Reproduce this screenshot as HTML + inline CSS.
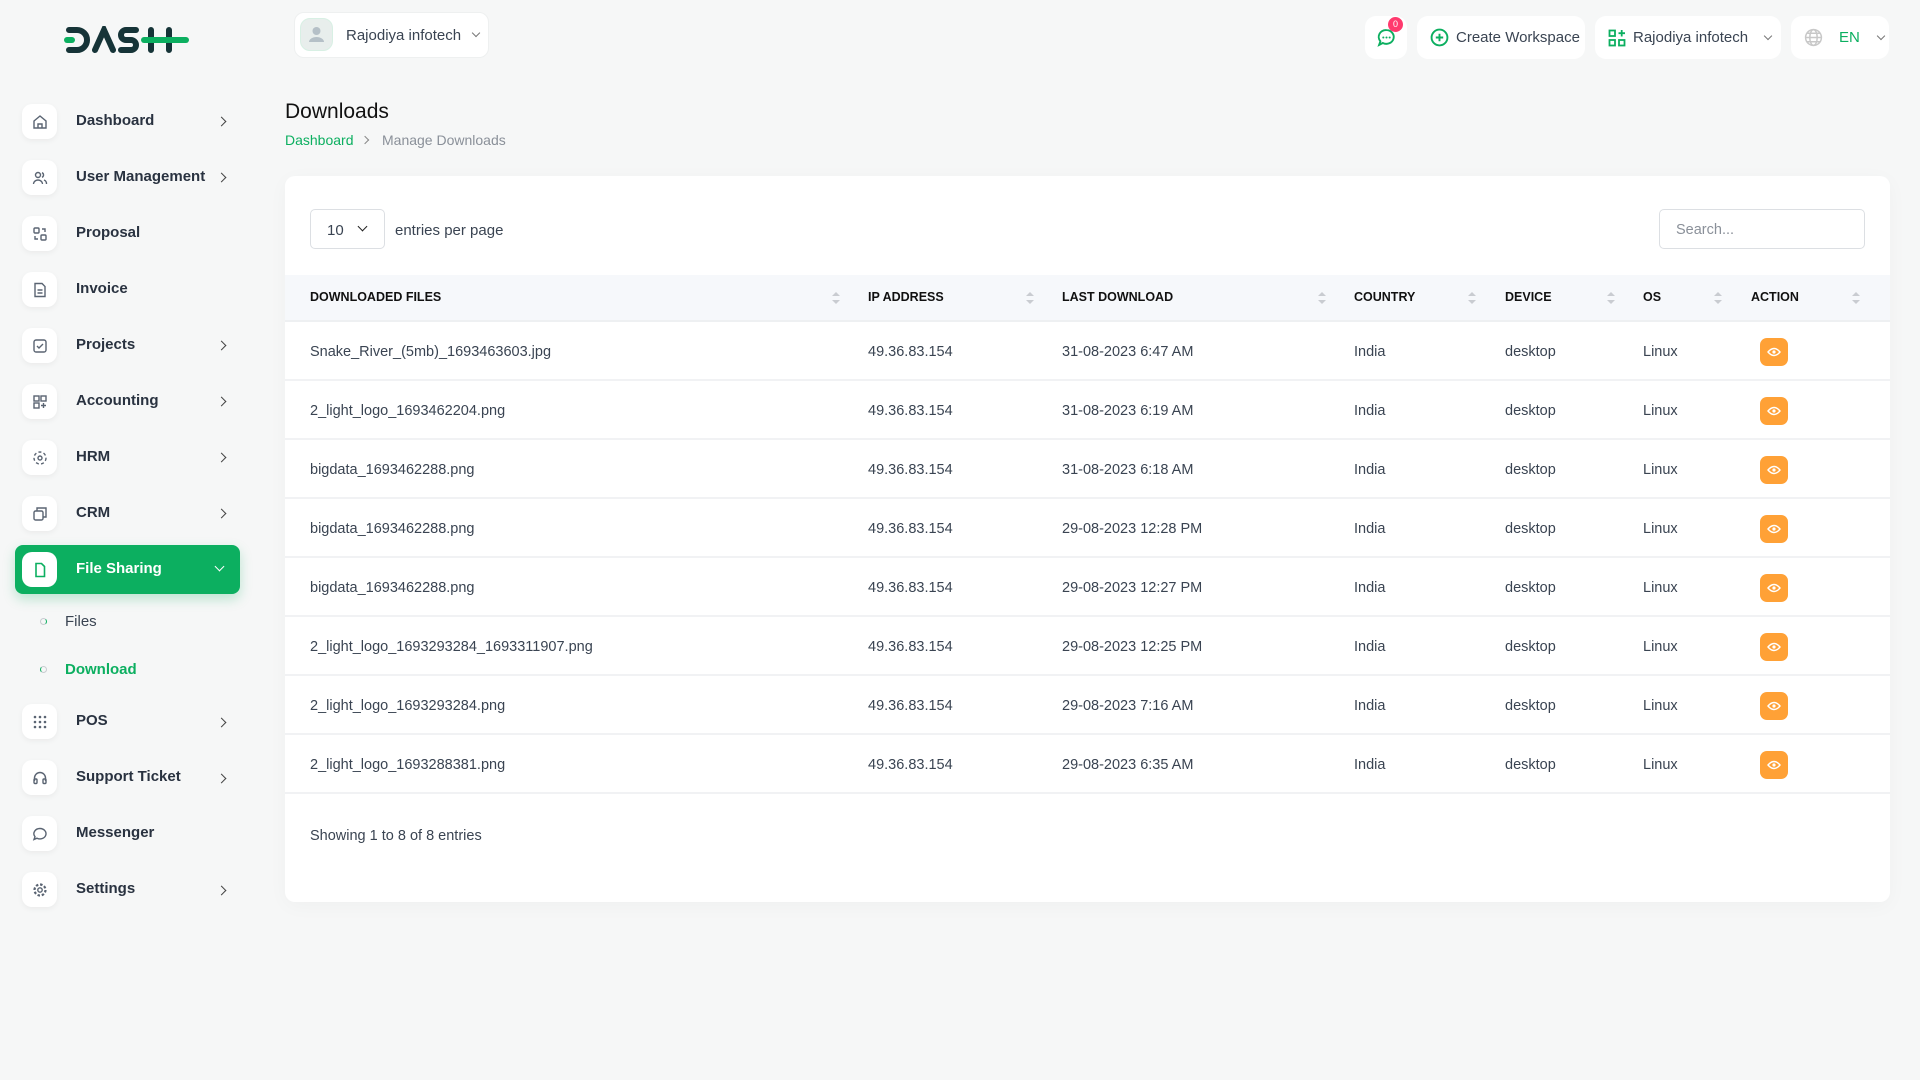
<!DOCTYPE html>
<html><head><meta charset="utf-8"><style>
*{box-sizing:border-box;margin:0;padding:0}
body{width:1920px;height:1080px;background:#f6f7f7;font-family:"Liberation Sans",sans-serif;color:#293240;position:relative;overflow:hidden}
.a{position:absolute;white-space:nowrap}
.ib{position:absolute;left:22px;width:35px;height:35px;background:#fff;border-radius:10px;box-shadow:0 2px 6px rgba(0,0,0,.05);display:flex;align-items:center;justify-content:center}
.lb{position:absolute;left:76px;font-size:15px;font-weight:bold;color:#293240;white-space:nowrap}
.ch{position:absolute;left:218px;width:7px;height:7px;border-right:1.6px solid #444;border-bottom:1.6px solid #444;transform:rotate(-45deg)}
.pill{position:absolute;top:16px;height:43px;background:#fff;border-radius:11px;display:flex;align-items:center;font-size:15px;color:#3a4452;white-space:nowrap}
.th{position:absolute;top:290px;font-size:12.5px;font-weight:bold;color:#111}
.sort{position:absolute;top:292px;width:8px;height:14px}
.sort:before{content:"";position:absolute;left:0;top:0;border:4px solid transparent;border-bottom:4px solid #c9ccd1;border-top:0}
.sort:after{content:"";position:absolute;left:0;top:8px;border:4px solid transparent;border-top:4px solid #c9ccd1;border-bottom:0}
.row{position:absolute;left:285px;width:1605px;height:59px;border-bottom:2px solid #f1f2f4}
.c{position:absolute;font-size:14.5px;color:#3a4452;top:22px;white-space:nowrap}
.eye{position:absolute;left:1475px;top:16px;width:28px;height:28px;background:#ffa136;border-radius:7px;display:flex;align-items:center;justify-content:center}
.dd{flex:none;width:6px;height:6px;border-right:1.3px solid #777;border-bottom:1.3px solid #777;transform:rotate(45deg);margin-top:-4px}
</style></head><body>
<svg class="a" style="left:64px;top:26px" width="126" height="28" viewBox="0 0 126 28">
<g fill="none" stroke-linecap="round" stroke-width="6">
<path d="M5 4H13A10 10 0 0 1 13 24H5" stroke="#163438"/>
<path d="M3 14H8" stroke="#0caf60"/>
<path d="M31 24L40 4L49 24" stroke="#163438"/>
<path d="M72 4H62A5 5 0 0 0 62 14H67A5 5 0 0 1 67 24H57" stroke="#163438"/>
<path d="M87 4V24M105 4V24" stroke="#163438"/>
<path d="M80 14H122" stroke="#0caf60"/>
</g></svg>

<div class="a" style="left:294px;top:12px;width:195px;height:46px;background:#fff;border:1px solid #eef0f0;border-radius:10px"></div>
<div class="a" style="left:300px;top:18px;width:33px;height:33px;border-radius:10px;background:#e8eeec;border:1px solid #d8f0e4"></div>
<svg class="a" style="left:306px;top:24px" width="21" height="21" viewBox="0 0 21 21"><circle cx="10.5" cy="7" r="4" fill="#b5c0c7"/><path d="M3 18a7.5 5 0 0 1 15 0z" fill="#b5c0c7"/></svg>
<div class="a" style="left:346px;top:27px;font-size:15px;color:#3a4452">Rajodiya infotech</div>
<div class="a" style="left:473px;top:30px;width:6px;height:6px;border-right:1.3px solid #777;border-bottom:1.3px solid #777;transform:rotate(45deg)"></div>

<div class="pill" style="left:1365px;width:42px;justify-content:center"><svg width="19" height="19" viewBox="0 0 18 18"><path d="M9 2a7 6.5 0 1 1-3.5 12.2L2 16l1.2-3.4A7 6.5 0 0 1 9 2z" fill="none" stroke="#0caf60" stroke-width="1.8"/><circle cx="6" cy="9" r="1" fill="#0caf60"/><circle cx="9" cy="9" r="1" fill="#0caf60"/><circle cx="12" cy="9" r="1" fill="#0caf60"/></svg></div>
<div class="a" style="left:1388px;top:17px;width:15px;height:15px;border-radius:8px;background:#ff3a6e;color:#fff;font-size:9px;text-align:center;line-height:15px">0</div>
<div class="pill" style="left:1417px;width:168px;padding-left:13px"><svg width="19" height="19" viewBox="0 0 18 18" style="margin-right:7px;flex:none"><circle cx="9" cy="9" r="7.5" fill="none" stroke="#0caf60" stroke-width="1.8"/><path d="M9 5.5v7M5.5 9h7" stroke="#0caf60" stroke-width="1.8"/></svg>Create Workspace</div>
<div class="pill" style="left:1595px;width:186px;padding-left:13px"><svg width="18" height="18" viewBox="0 0 18 18" style="margin-right:7px;flex:none"><g fill="none" stroke="#0caf60" stroke-width="1.8"><rect x="1.5" y="1.5" width="5.5" height="5.5"/><rect x="1.5" y="11" width="5.5" height="5.5"/><rect x="11" y="11" width="5.5" height="5.5"/><path d="M13.7 1v6.5M10.5 4.2H17"/></g></svg>Rajodiya infotech<div class="dd" style="margin-left:17px"></div></div>
<div class="pill" style="left:1791px;width:98px;padding-left:13px"><svg width="19" height="19" viewBox="0 0 18 18" style="flex:none"><g fill="none" stroke="#c8c8c8" stroke-width="1.4"><circle cx="9" cy="9" r="7.5"/><ellipse cx="9" cy="9" rx="3.5" ry="7.5"/><path d="M1.5 9h15M3 5h12M3 13h12"/></g></svg><span style="color:#0caf60;margin-left:16px">EN</span><div class="dd" style="margin-left:18px"></div></div>

<div class="ib" style="top:104px"><svg width="16" height="16" viewBox="0 0 16 16"><path d="M2 7L8 2l6 5v7H2z M6 14v-4h4v4" fill="none" stroke="#5a6472" stroke-width="1.4"/></svg></div><div class="lb" style="top:112px">Dashboard</div><div class="ch" style="top:118px"></div>
<div class="ib" style="top:160px"><svg width="16" height="16" viewBox="0 0 16 16"><g fill="none" stroke="#5a6472" stroke-width="1.4"><circle cx="6" cy="5" r="2.5"/><path d="M1.5 14a4.5 4 0 0 1 9 0M10 2.7a2.5 2.5 0 0 1 0 4.6M12 10a4 4 0 0 1 2.5 4"/></g></svg></div><div class="lb" style="top:168px">User Management</div><div class="ch" style="top:174px"></div>
<div class="ib" style="top:216px"><svg width="16" height="16" viewBox="0 0 16 16"><g fill="none" stroke="#5a6472" stroke-width="1.4"><rect x="2" y="2" width="5" height="5" rx="1"/><rect x="9" y="9" width="5" height="5" rx="1"/><path d="M10 3h3v3M6 13H3v-3"/></g></svg></div><div class="lb" style="top:224px">Proposal</div>
<div class="ib" style="top:272px"><svg width="16" height="16" viewBox="0 0 16 16"><g fill="none" stroke="#5a6472" stroke-width="1.4"><path d="M3 1.5h7l3 3v10H3z"/><path d="M5.5 8h5M5.5 11h5"/></g></svg></div><div class="lb" style="top:280px">Invoice</div>
<div class="ib" style="top:328px"><svg width="16" height="16" viewBox="0 0 16 16"><g fill="none" stroke="#5a6472" stroke-width="1.4"><rect x="2" y="2" width="12" height="12" rx="2"/><path d="M5 8l2 2 4-4"/></g></svg></div><div class="lb" style="top:336px">Projects</div><div class="ch" style="top:342px"></div>
<div class="ib" style="top:384px"><svg width="16" height="16" viewBox="0 0 16 16"><g fill="none" stroke="#5a6472" stroke-width="1.4"><rect x="2" y="2" width="5" height="5"/><rect x="9" y="2" width="5" height="5"/><rect x="2" y="9" width="5" height="5"/><path d="M11.5 9v5M9 11.5h5"/></g></svg></div><div class="lb" style="top:392px">Accounting</div><div class="ch" style="top:398px"></div>
<div class="ib" style="top:440px"><svg width="16" height="16" viewBox="0 0 16 16"><g fill="none" stroke="#5a6472" stroke-width="1.4"><circle cx="8" cy="8" r="2"/><circle cx="8" cy="8" r="6" stroke-dasharray="3 2.3"/></g></svg></div><div class="lb" style="top:448px">HRM</div><div class="ch" style="top:454px"></div>
<div class="ib" style="top:496px"><svg width="16" height="16" viewBox="0 0 16 16"><g fill="none" stroke="#5a6472" stroke-width="1.4"><rect x="2" y="5" width="9" height="9" rx="1.5"/><path d="M5 5V2h9v9h-3"/></g></svg></div><div class="lb" style="top:504px">CRM</div><div class="ch" style="top:510px"></div>
<div class="a" style="left:15px;top:545px;width:225px;height:49px;background:#0caf60;border-radius:8px;box-shadow:0 5px 12px rgba(12,175,96,.25)"></div>
<div class="ib" style="top:552px;box-shadow:none"><svg width="16" height="16" viewBox="0 0 16 16"><path d="M4 1.5h5.5l3 3v10H4z" fill="none" stroke="#0caf60" stroke-width="1.6"/></svg></div>
<div class="lb" style="top:560px;color:#fff">File Sharing</div>
<div class="a" style="left:216px;top:563px;width:7px;height:7px;border-right:1.5px solid #fff;border-bottom:1.5px solid #fff;transform:rotate(45deg)"></div>
<div class="a" style="left:40px;top:618px;width:7px;height:7px;border-radius:50%;border:1.5px solid #c8ccd0;border-right-color:#0caf60"></div>
<div class="a" style="left:65px;top:613px;font-size:15px;color:#3a4452">Files</div>
<div class="a" style="left:40px;top:666px;width:7px;height:7px;border-radius:50%;border:1.5px solid #c8ccd0;border-left-color:#0caf60"></div>
<div class="a" style="left:65px;top:661px;font-size:15px;color:#0caf60;font-weight:bold">Download</div>
<div class="ib" style="top:704px"><svg width="16" height="16" viewBox="0 0 16 16" fill="#5a6472"><circle cx="3" cy="3" r="1.3"/><circle cx="8" cy="3" r="1.3"/><circle cx="13" cy="3" r="1.3"/><circle cx="3" cy="8" r="1.3"/><circle cx="8" cy="8" r="1.3"/><circle cx="13" cy="8" r="1.3"/><circle cx="3" cy="13" r="1.3"/><circle cx="8" cy="13" r="1.3"/><circle cx="13" cy="13" r="1.3"/></svg></div><div class="lb" style="top:712px">POS</div><div class="ch" style="top:719px"></div>
<div class="ib" style="top:760px"><svg width="16" height="16" viewBox="0 0 16 16"><g fill="none" stroke="#5a6472" stroke-width="1.4"><path d="M2.5 11V8a5.5 5.5 0 0 1 11 0v3"/><rect x="2" y="9" width="3" height="4.5" rx="1"/><rect x="11" y="9" width="3" height="4.5" rx="1"/></g></svg></div><div class="lb" style="top:768px">Support Ticket</div><div class="ch" style="top:775px"></div>
<div class="ib" style="top:816px"><svg width="16" height="16" viewBox="0 0 16 16"><path d="M8 2.5a6 5.2 0 1 1-3 9.7L2 13.5l1-2.8A6 5.2 0 0 1 8 2.5z" fill="none" stroke="#5a6472" stroke-width="1.4"/></svg></div><div class="lb" style="top:824px">Messenger</div>
<div class="ib" style="top:872px"><svg width="16" height="16" viewBox="0 0 16 16"><g fill="none" stroke="#5a6472" stroke-width="1.4"><circle cx="8" cy="8" r="2.2"/><circle cx="8" cy="8" r="5.5" stroke-dasharray="2.5 1.8" stroke-width="2.2"/></g></svg></div><div class="lb" style="top:880px">Settings</div><div class="ch" style="top:887px"></div>

<div class="a" style="left:285px;top:100px;font-size:21px;color:#111">Downloads</div>
<div class="a" style="left:285px;top:132px;font-size:14px;color:#0caf60">Dashboard</div>
<div class="a" style="left:362px;top:137px;width:6px;height:6px;border-right:1.3px solid #888;border-bottom:1.3px solid #888;transform:rotate(-45deg)"></div>
<div class="a" style="left:382px;top:132px;font-size:14px;color:#8a9099">Manage Downloads</div>

<div class="a" style="left:285px;top:176px;width:1605px;height:726px;background:#fff;border-radius:10px;box-shadow:0 4px 20px rgba(0,0,0,.03)"></div>
<div class="a" style="left:310px;top:209px;width:75px;height:40px;border:1px solid #dcdfe3;border-radius:5px"></div>
<div class="a" style="left:327px;top:222px;font-size:15px;color:#3a4452">10</div>
<div class="a" style="left:359px;top:223px;width:7px;height:7px;border-right:1.7px solid #222;border-bottom:1.7px solid #222;transform:rotate(45deg)"></div>
<div class="a" style="left:395px;top:222px;font-size:15px;color:#3a4452">entries per page</div>
<div class="a" style="left:1659px;top:209px;width:206px;height:40px;border:1px solid #dcdfe3;border-radius:5px;padding:12px 16px;font-size:14.5px;color:#8a9099">Search...</div>

<div class="a" style="left:285px;top:275px;width:1605px;height:47px;background:#f6f8fb;border-bottom:2px solid #eef0f2"></div>
<div class="th" style="left:310px">DOWNLOADED FILES</div><div class="sort" style="left:832px"></div>
<div class="th" style="left:868px">IP ADDRESS</div><div class="sort" style="left:1026px"></div>
<div class="th" style="left:1062px">LAST DOWNLOAD</div><div class="sort" style="left:1318px"></div>
<div class="th" style="left:1354px">COUNTRY</div><div class="sort" style="left:1468px"></div>
<div class="th" style="left:1505px">DEVICE</div><div class="sort" style="left:1607px"></div>
<div class="th" style="left:1643px">OS</div><div class="sort" style="left:1714px"></div>
<div class="th" style="left:1751px">ACTION</div><div class="sort" style="left:1852px"></div>

<div class="row" style="top:322px"><div class="c" style="left:25px">Snake_River_(5mb)_1693463603.jpg</div><div class="c" style="left:583px">49.36.83.154</div><div class="c" style="left:777px">31-08-2023 6:47 AM</div><div class="c" style="left:1069px">India</div><div class="c" style="left:1220px">desktop</div><div class="c" style="left:1358px">Linux</div><div class="eye"><svg width="14" height="10" viewBox="0 0 14 10"><path d="M1 5Q7-2 13 5Q7 12 1 5z" fill="none" stroke="#fff" stroke-width="1.4"/><circle cx="7" cy="5" r="1.6" fill="#fff"/></svg></div></div>
<div class="row" style="top:381px"><div class="c" style="left:25px">2_light_logo_1693462204.png</div><div class="c" style="left:583px">49.36.83.154</div><div class="c" style="left:777px">31-08-2023 6:19 AM</div><div class="c" style="left:1069px">India</div><div class="c" style="left:1220px">desktop</div><div class="c" style="left:1358px">Linux</div><div class="eye"><svg width="14" height="10" viewBox="0 0 14 10"><path d="M1 5Q7-2 13 5Q7 12 1 5z" fill="none" stroke="#fff" stroke-width="1.4"/><circle cx="7" cy="5" r="1.6" fill="#fff"/></svg></div></div>
<div class="row" style="top:440px"><div class="c" style="left:25px">bigdata_1693462288.png</div><div class="c" style="left:583px">49.36.83.154</div><div class="c" style="left:777px">31-08-2023 6:18 AM</div><div class="c" style="left:1069px">India</div><div class="c" style="left:1220px">desktop</div><div class="c" style="left:1358px">Linux</div><div class="eye"><svg width="14" height="10" viewBox="0 0 14 10"><path d="M1 5Q7-2 13 5Q7 12 1 5z" fill="none" stroke="#fff" stroke-width="1.4"/><circle cx="7" cy="5" r="1.6" fill="#fff"/></svg></div></div>
<div class="row" style="top:499px"><div class="c" style="left:25px">bigdata_1693462288.png</div><div class="c" style="left:583px">49.36.83.154</div><div class="c" style="left:777px">29-08-2023 12:28 PM</div><div class="c" style="left:1069px">India</div><div class="c" style="left:1220px">desktop</div><div class="c" style="left:1358px">Linux</div><div class="eye"><svg width="14" height="10" viewBox="0 0 14 10"><path d="M1 5Q7-2 13 5Q7 12 1 5z" fill="none" stroke="#fff" stroke-width="1.4"/><circle cx="7" cy="5" r="1.6" fill="#fff"/></svg></div></div>
<div class="row" style="top:558px"><div class="c" style="left:25px">bigdata_1693462288.png</div><div class="c" style="left:583px">49.36.83.154</div><div class="c" style="left:777px">29-08-2023 12:27 PM</div><div class="c" style="left:1069px">India</div><div class="c" style="left:1220px">desktop</div><div class="c" style="left:1358px">Linux</div><div class="eye"><svg width="14" height="10" viewBox="0 0 14 10"><path d="M1 5Q7-2 13 5Q7 12 1 5z" fill="none" stroke="#fff" stroke-width="1.4"/><circle cx="7" cy="5" r="1.6" fill="#fff"/></svg></div></div>
<div class="row" style="top:617px"><div class="c" style="left:25px">2_light_logo_1693293284_1693311907.png</div><div class="c" style="left:583px">49.36.83.154</div><div class="c" style="left:777px">29-08-2023 12:25 PM</div><div class="c" style="left:1069px">India</div><div class="c" style="left:1220px">desktop</div><div class="c" style="left:1358px">Linux</div><div class="eye"><svg width="14" height="10" viewBox="0 0 14 10"><path d="M1 5Q7-2 13 5Q7 12 1 5z" fill="none" stroke="#fff" stroke-width="1.4"/><circle cx="7" cy="5" r="1.6" fill="#fff"/></svg></div></div>
<div class="row" style="top:676px"><div class="c" style="left:25px">2_light_logo_1693293284.png</div><div class="c" style="left:583px">49.36.83.154</div><div class="c" style="left:777px">29-08-2023 7:16 AM</div><div class="c" style="left:1069px">India</div><div class="c" style="left:1220px">desktop</div><div class="c" style="left:1358px">Linux</div><div class="eye"><svg width="14" height="10" viewBox="0 0 14 10"><path d="M1 5Q7-2 13 5Q7 12 1 5z" fill="none" stroke="#fff" stroke-width="1.4"/><circle cx="7" cy="5" r="1.6" fill="#fff"/></svg></div></div>
<div class="row" style="top:735px"><div class="c" style="left:25px">2_light_logo_1693288381.png</div><div class="c" style="left:583px">49.36.83.154</div><div class="c" style="left:777px">29-08-2023 6:35 AM</div><div class="c" style="left:1069px">India</div><div class="c" style="left:1220px">desktop</div><div class="c" style="left:1358px">Linux</div><div class="eye"><svg width="14" height="10" viewBox="0 0 14 10"><path d="M1 5Q7-2 13 5Q7 12 1 5z" fill="none" stroke="#fff" stroke-width="1.4"/><circle cx="7" cy="5" r="1.6" fill="#fff"/></svg></div></div>

<div class="a" style="left:310px;top:828px;font-size:14.5px;color:#3a4452">Showing 1 to 8 of 8 entries</div>
</body></html>
